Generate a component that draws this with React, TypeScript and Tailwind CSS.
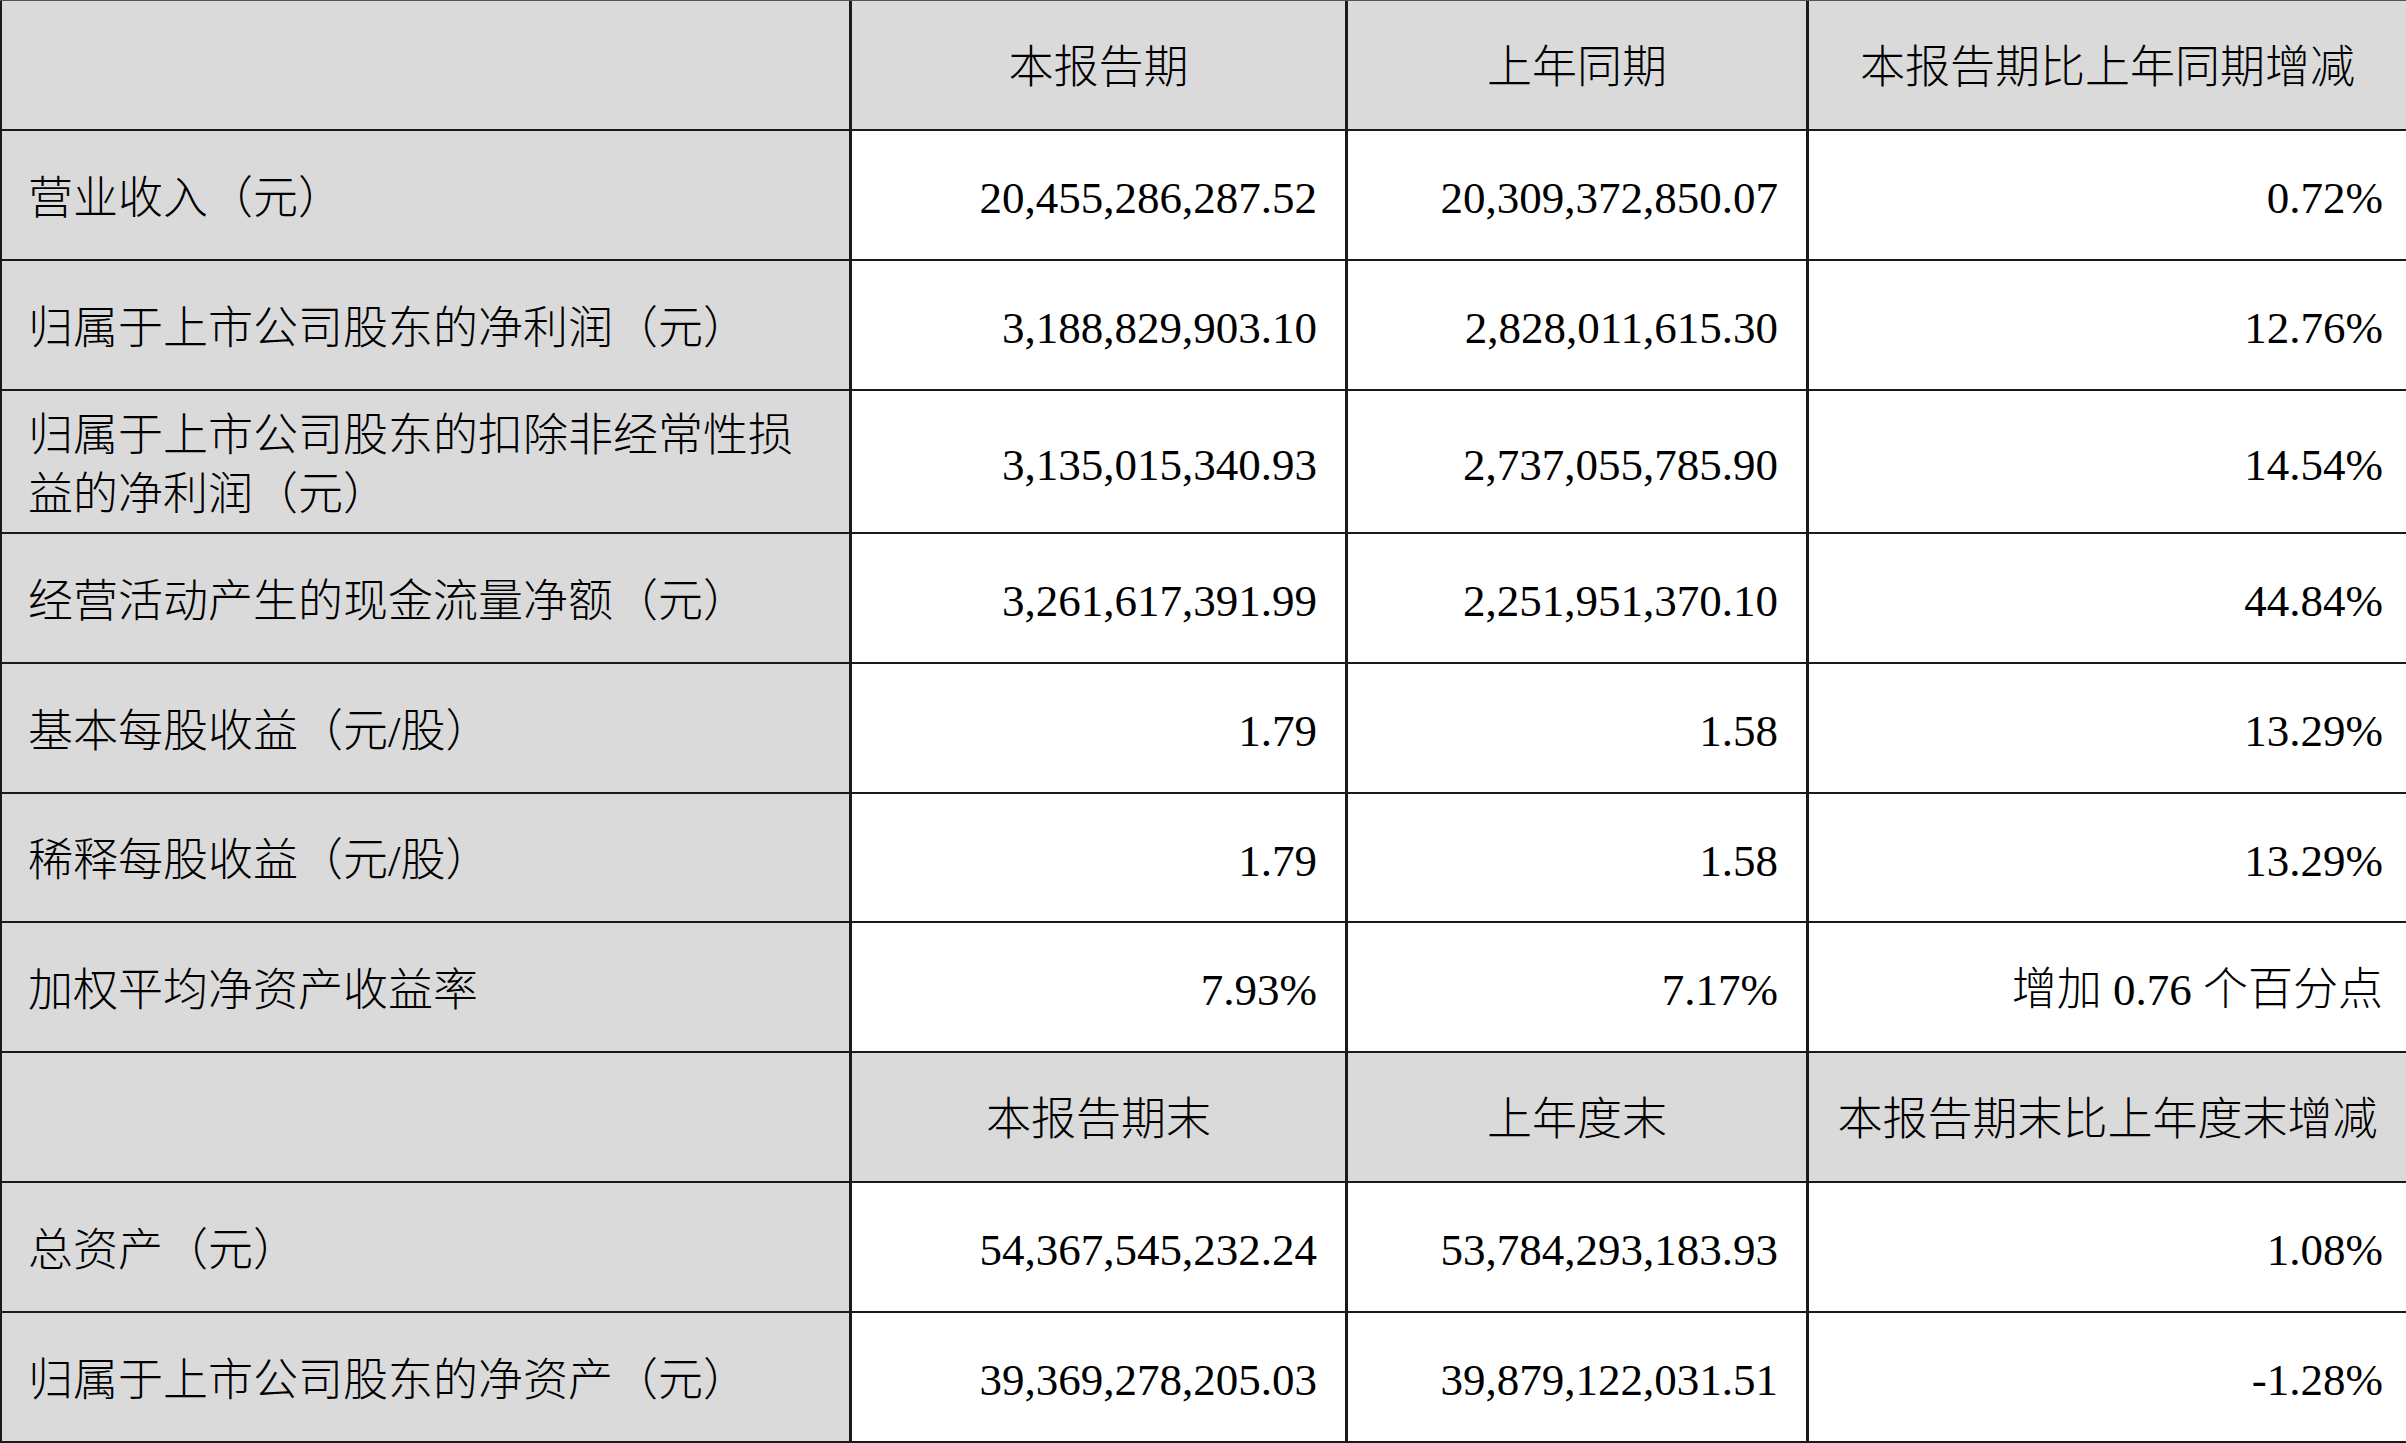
import React from "react";

type Row = {
  label: React.ReactNode;
  values: [string, string, string];
  header?: boolean;
};

const rows: Row[] = [
  { label: "", values: ["本报告期", "上年同期", "本报告期比上年同期增减"], header: true },
  { label: "营业收入（元）", values: ["20,455,286,287.52", "20,309,372,850.07", "0.72%"] },
  { label: "归属于上市公司股东的净利润（元）", values: ["3,188,829,903.10", "2,828,011,615.30", "12.76%"] },
  {
    label: (
      <>
        归属于上市公司股东的扣除非经常性损
        <br />
        益的净利润（元）
      </>
    ),
    values: ["3,135,015,340.93", "2,737,055,785.90", "14.54%"],
  },
  { label: "经营活动产生的现金流量净额（元）", values: ["3,261,617,391.99", "2,251,951,370.10", "44.84%"] },
  { label: "基本每股收益（元/股）", values: ["1.79", "1.58", "13.29%"] },
  { label: "稀释每股收益（元/股）", values: ["1.79", "1.58", "13.29%"] },
  { label: "加权平均净资产收益率", values: ["7.93%", "7.17%", "增加 0.76 个百分点"] },
  { label: "", values: ["本报告期末", "上年度末", "本报告期末比上年度末增减"], header: true },
  { label: "总资产（元）", values: ["54,367,545,232.24", "53,784,293,183.93", "1.08%"] },
  { label: "归属于上市公司股东的净资产（元）", values: ["39,369,278,205.03", "39,879,122,031.51", "-1.28%"] },
];

const font = "font-['Liberation_Serif','Noto_Sans_CJK_SC',serif]";

export default function App() {
  return (
    <div className="w-[2406px] h-[1443px] overflow-hidden bg-[#555] pt-px">
      <div className="bg-[#1a1a1a] pl-[2px] pb-[2px] h-[1442px]">
        <div
          className={`grid grid-cols-[847px_493px_458px_1fr] grid-rows-[128px_128px_128px_141px_128px_128px_127px_128px_128px_128px_128px] gap-x-[3px] gap-y-[2px] text-[45px] font-light text-black ${font}`}
        >
          {rows.map((row, i) => (
            <React.Fragment key={i}>
              <div className="bg-[#dadada] flex items-center pl-[26px] pt-[8px] leading-[59px]">
                <span>{row.label}</span>
              </div>
              {row.values.map((v, j) =>
                row.header ? (
                  <div key={j} className="bg-[#dadada] flex items-center justify-center pt-[8px]">
                    <span>{v}</span>
                  </div>
                ) : (
                  <div
                    key={j}
                    className={`bg-white flex items-center justify-end pt-[8px] ${j === 2 ? "pr-[23px]" : "pr-[28px]"}`}
                  >
                    <span>{v}</span>
                  </div>
                )
              )}
            </React.Fragment>
          ))}
        </div>
      </div>
    </div>
  );
}
